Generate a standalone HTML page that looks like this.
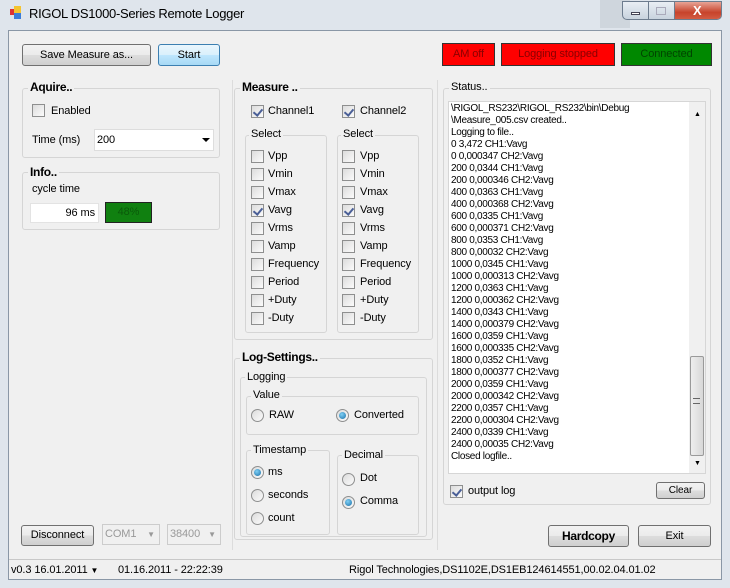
<!DOCTYPE html>
<html><head><style>
*{box-sizing:border-box;margin:0;padding:0}
body{width:730px;height:588px;overflow:hidden;background:#dfe5ec;font-family:"Liberation Sans",sans-serif;font-size:11px;letter-spacing:-0.1px;color:#000;position:relative}
.a{position:absolute;white-space:nowrap;line-height:17px}
.gb{position:absolute;border:1px solid #d5d5d5;border-radius:3px}
.gt{position:absolute;background:#f0f0f0;padding:0 2px;line-height:13px}
.b{font-weight:bold;font-family:"Liberation Sans",sans-serif;font-size:12px;letter-spacing:-0.3px}
.btn{position:absolute;border:1px solid #707070;border-radius:3px;background:linear-gradient(#f2f2f2,#ebebeb 50%,#dddddd 51%,#cfcfcf);text-align:center}
.cb{position:absolute;width:13px;height:13px;border:1px solid #8e8f8f;background:linear-gradient(135deg,#dcdcdc,#fbfbfb)}
.cb.on::after{content:"";position:absolute;left:3px;top:1px;width:4px;height:7px;border:solid #4a5f97;border-width:0 2px 2px 0;transform:rotate(40deg)}
.rb{position:absolute;width:13px;height:13px;border:1px solid #8e8f8f;border-radius:50%;background:linear-gradient(135deg,#dcdcdc,#fbfbfb)}
.rb.on::after{content:"";position:absolute;left:2px;top:2px;width:7px;height:7px;border-radius:50%;background:radial-gradient(circle at 40% 35%,#7fd0f5,#1a6fa8)}
.log{position:absolute;left:451px;top:103px;font-family:"Liberation Sans",sans-serif;font-size:10px;letter-spacing:-0.3px;line-height:12px;color:#000}
.ind{position:absolute;border:1px solid #333;text-align:center;line-height:21px}
</style></head><body>
<div class="a" style="left:600px;top:0;width:30px;height:28px;background:#cfd6dd"></div>
<div class="a" style="left:10px;top:9px;width:6px;height:6px;background:#d33"></div>
<div class="a" style="left:14px;top:6px;width:7px;height:7px;background:#f4c430"></div>
<div class="a" style="left:14px;top:13px;width:7px;height:6px;background:#3b7dd8"></div>
<div class="a" style="left:29px;top:5px;font-size:13px;letter-spacing:-0.3px">RIGOL DS1000-Series Remote Logger</div>
<div class="a" style="left:622px;top:1px;width:100px;height:19px;border:1px solid #6d7c8e;border-radius:0 0 5px 5px;background:linear-gradient(#e9eef4,#c8d3de);overflow:hidden">
<div class="a" style="left:25px;top:0;width:1px;height:19px;background:#6d7c8e"></div>
<div class="a" style="left:51px;top:0;width:1px;height:19px;background:#6d7c8e"></div>
<div class="a" style="left:52px;top:0;width:48px;height:19px;background:linear-gradient(#e8a496,#c7432b 55%,#d6634a)"></div>
<div class="a" style="left:8px;top:10px;width:9px;height:3px;background:#fff;border:1px solid #445"></div>
<div class="a" style="left:33px;top:5px;width:10px;height:8px;border:1px solid #aab"></div>
<div class="a" style="left:70px;top:0;color:#fff;font-weight:bold;font-size:13px">X</div>
</div>
<div class="a" style="left:8px;top:30px;width:714px;height:550px;background:#f0f0f0;border:1px solid #8a97a6"></div>
<div class="btn" style="left:22px;top:44px;width:129px;height:22px;line-height:20px">Save Measure as...</div>
<div class="btn" style="left:158px;top:44px;width:62px;height:22px;line-height:20px;border-color:#3c7fb1;background:linear-gradient(#eaf6fd,#d9f0fc 50%,#bee6fd 51%,#a7d9f5)">Start</div>
<div class="ind" style="left:442px;top:43px;width:53px;height:23px;background:#f00;color:#800">AM off</div>
<div class="ind" style="left:501px;top:43px;width:114px;height:23px;background:#f00;color:#800">Logging stopped</div>
<div class="ind" style="left:621px;top:43px;width:91px;height:23px;background:#080;color:#040">Connected</div>
<div class="a" style="left:232px;top:80px;width:1px;height:470px;background:#dcdcdc"></div>
<div class="a" style="left:437px;top:80px;width:1px;height:470px;background:#dcdcdc"></div>
<div class="gb" style="left:22px;top:88px;width:198px;height:70px"></div>
<div class="gt b" style="left:28px;top:81px">Aquire..</div>
<div class="cb" style="left:32px;top:104px"></div><div class="a" style="left:51px;top:103px">Enabled</div>
<div class="a" style="left:32px;top:132px">Time (ms)</div>
<div class="a" style="left:94px;top:129px;width:120px;height:22px;background:#fff;border:1px solid #ddd;padding:2px 2px">200</div>
<div class="a" style="left:202px;top:138px;border:4px solid transparent;border-top:4px solid #000;border-bottom:0;width:0;height:0"></div>
<div class="gb" style="left:22px;top:172px;width:198px;height:58px"></div>
<div class="gt b" style="left:28px;top:166px">Info..</div>
<div class="a" style="left:32px;top:181px">cycle time</div>
<div class="a" style="left:30px;top:203px;width:69px;height:20px;background:#fff;border:1px solid #e3e3e3;text-align:right;padding:1px 3px">96 ms</div>
<div class="a" style="left:105px;top:202px;width:47px;height:21px;background:#108010;border:1px solid #222;color:#0a5a0a;text-align:center;line-height:19px">48%</div>
<div class="gb" style="left:234px;top:88px;width:199px;height:252px"></div>
<div class="gt b" style="left:240px;top:81px">Measure ..</div>
<div class="cb on" style="left:251px;top:105px"></div><div class="a" style="left:268px;top:103px">Channel1</div>
<div class="cb on" style="left:342px;top:105px"></div><div class="a" style="left:360px;top:103px">Channel2</div>
<div class="gb" style="left:245px;top:135px;width:82px;height:198px"></div>
<div class="gt" style="left:249px;top:128px">Select</div>
<div class="gb" style="left:337px;top:135px;width:82px;height:198px"></div>
<div class="gt" style="left:341px;top:128px">Select</div>
<div class="cb" style="left:251px;top:150px"></div><div class="a" style="left:268px;top:148px">Vpp</div>
<div class="cb" style="left:251px;top:168px"></div><div class="a" style="left:268px;top:166px">Vmin</div>
<div class="cb" style="left:251px;top:186px"></div><div class="a" style="left:268px;top:184px">Vmax</div>
<div class="cb on" style="left:251px;top:204px"></div><div class="a" style="left:268px;top:202px">Vavg</div>
<div class="cb" style="left:251px;top:222px"></div><div class="a" style="left:268px;top:220px">Vrms</div>
<div class="cb" style="left:251px;top:240px"></div><div class="a" style="left:268px;top:238px">Vamp</div>
<div class="cb" style="left:251px;top:258px"></div><div class="a" style="left:268px;top:256px">Frequency</div>
<div class="cb" style="left:251px;top:276px"></div><div class="a" style="left:268px;top:274px">Period</div>
<div class="cb" style="left:251px;top:294px"></div><div class="a" style="left:268px;top:292px">+Duty</div>
<div class="cb" style="left:251px;top:312px"></div><div class="a" style="left:268px;top:310px">-Duty</div>
<div class="cb" style="left:342px;top:150px"></div><div class="a" style="left:360px;top:148px">Vpp</div>
<div class="cb" style="left:342px;top:168px"></div><div class="a" style="left:360px;top:166px">Vmin</div>
<div class="cb" style="left:342px;top:186px"></div><div class="a" style="left:360px;top:184px">Vmax</div>
<div class="cb on" style="left:342px;top:204px"></div><div class="a" style="left:360px;top:202px">Vavg</div>
<div class="cb" style="left:342px;top:222px"></div><div class="a" style="left:360px;top:220px">Vrms</div>
<div class="cb" style="left:342px;top:240px"></div><div class="a" style="left:360px;top:238px">Vamp</div>
<div class="cb" style="left:342px;top:258px"></div><div class="a" style="left:360px;top:256px">Frequency</div>
<div class="cb" style="left:342px;top:276px"></div><div class="a" style="left:360px;top:274px">Period</div>
<div class="cb" style="left:342px;top:294px"></div><div class="a" style="left:360px;top:292px">+Duty</div>
<div class="cb" style="left:342px;top:312px"></div><div class="a" style="left:360px;top:310px">-Duty</div>
<div class="gb" style="left:234px;top:358px;width:199px;height:182px"></div>
<div class="gt b" style="left:240px;top:351px">Log-Settings..</div>
<div class="gb" style="left:240px;top:377px;width:187px;height:160px"></div>
<div class="gt" style="left:245px;top:371px">Logging</div>
<div class="gb" style="left:246px;top:396px;width:173px;height:39px"></div>
<div class="gt" style="left:251px;top:389px">Value</div>
<div class="rb" style="left:251px;top:409px"></div><div class="a" style="left:269px;top:407px">RAW</div>
<div class="rb on" style="left:336px;top:409px"></div><div class="a" style="left:354px;top:407px">Converted</div>
<div class="gb" style="left:246px;top:450px;width:84px;height:85px"></div>
<div class="gt" style="left:251px;top:444px">Timestamp</div>
<div class="rb on" style="left:251px;top:466px"></div><div class="a" style="left:268px;top:464px">ms</div>
<div class="rb" style="left:251px;top:489px"></div><div class="a" style="left:268px;top:487px">seconds</div>
<div class="rb" style="left:251px;top:512px"></div><div class="a" style="left:268px;top:510px">count</div>
<div class="gb" style="left:337px;top:455px;width:82px;height:80px"></div>
<div class="gt" style="left:342px;top:449px">Decimal</div>
<div class="rb" style="left:342px;top:473px"></div><div class="a" style="left:360px;top:470px">Dot</div>
<div class="rb on" style="left:342px;top:496px"></div><div class="a" style="left:360px;top:493px">Comma</div>
<div class="gb" style="left:443px;top:88px;width:268px;height:417px"></div>
<div class="gt" style="left:449px;top:81px">Status..</div>
<div class="a" style="left:448px;top:101px;width:258px;height:373px;background:#fff;border:1px solid #d6d6d6"></div>
<div class="a" style="left:689px;top:102px;width:16px;height:371px;background:#f0f0f0"></div>
<div class="a" style="left:690px;top:356px;width:14px;height:100px;border:1px solid #9a9a9a;border-radius:2px;background:linear-gradient(90deg,#eee,#d8d8d8)"></div>
<div class="a" style="left:694px;top:106px;font-size:7px">▲</div>
<div class="a" style="left:694px;top:455px;font-size:7px">▼</div>
<div class="a" style="left:693px;top:398px;width:7px;height:6px;border-top:1px solid #666;border-bottom:1px solid #666"></div>
<div class="log">\RIGOL_RS232\RIGOL_RS232\bin\Debug<br>\Measure_005.csv created..<br>Logging to file..<br>0 3,472 CH1:Vavg<br>0 0,000347 CH2:Vavg<br>200 0,0344 CH1:Vavg<br>200 0,000346 CH2:Vavg<br>400 0,0363 CH1:Vavg<br>400 0,000368 CH2:Vavg<br>600 0,0335 CH1:Vavg<br>600 0,000371 CH2:Vavg<br>800 0,0353 CH1:Vavg<br>800 0,00032 CH2:Vavg<br>1000 0,0345 CH1:Vavg<br>1000 0,000313 CH2:Vavg<br>1200 0,0363 CH1:Vavg<br>1200 0,000362 CH2:Vavg<br>1400 0,0343 CH1:Vavg<br>1400 0,000379 CH2:Vavg<br>1600 0,0359 CH1:Vavg<br>1600 0,000335 CH2:Vavg<br>1800 0,0352 CH1:Vavg<br>1800 0,000377 CH2:Vavg<br>2000 0,0359 CH1:Vavg<br>2000 0,000342 CH2:Vavg<br>2200 0,0357 CH1:Vavg<br>2200 0,000304 CH2:Vavg<br>2400 0,0339 CH1:Vavg<br>2400 0,00035 CH2:Vavg<br>Closed logfile..</div>
<div class="cb on" style="left:450px;top:485px"></div><div class="a" style="left:468px;top:483px">output log</div>
<div class="btn" style="left:656px;top:482px;width:49px;height:17px;line-height:15px;font-size:10px">Clear</div>
<div class="btn" style="left:21px;top:525px;width:73px;height:21px;line-height:19px">Disconnect</div>
<div class="a" style="left:102px;top:524px;width:58px;height:21px;border:1px solid #ccc;color:#999;padding:1px 2px">COM1<span style="position:absolute;right:4px;top:1px;font-size:8px">▼</span></div>
<div class="a" style="left:167px;top:524px;width:54px;height:21px;border:1px solid #ccc;color:#999;padding:1px 2px">38400<span style="position:absolute;right:4px;top:1px;font-size:8px">▼</span></div>
<div class="btn b" style="left:548px;top:525px;width:81px;height:22px;line-height:20px">Hardcopy</div>
<div class="btn" style="left:638px;top:525px;width:73px;height:22px;line-height:20px">Exit</div>
<div class="a" style="left:9px;top:559px;width:712px;height:1px;background:#c8c8c8"></div>
<div class="a" style="left:11px;top:562px">v0.3 16.01.2011 <span style="font-size:8px">▼</span></div>
<div class="a" style="left:118px;top:562px">01.16.2011 - 22:22:39</div>
<div class="a" style="left:349px;top:562px">Rigol Technologies,DS1102E,DS1EB124614551,00.02.04.01.02</div>
</body></html>
